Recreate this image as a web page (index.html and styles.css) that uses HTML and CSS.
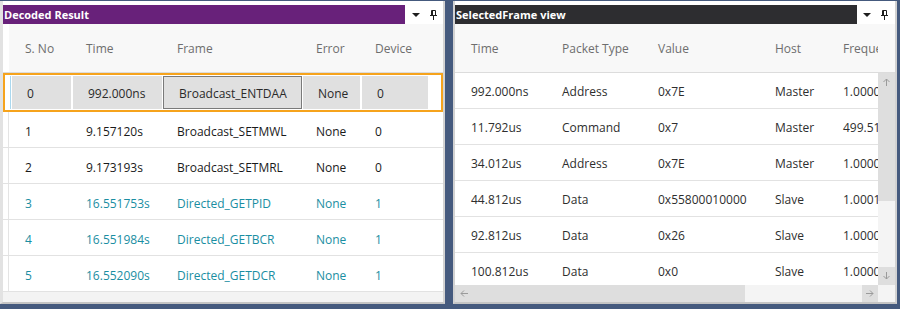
FILE: index.html
```html
<!DOCTYPE html>
<html>
    <head>
        <meta charset="UTF-8">
        <title>Decoded Result</title>
        <link rel="stylesheet" href="styles.css">
    </head>
    <body>
        <div class="dock">
            <!-- decoded result pane -->
            <div class="pane pane-left">
                <div class="titlebar">
                    <div class="title title-purple">Decoded Result</div>
                    <div class="tools">
                        <svg class="drop" width="8" height="4" viewBox="0 0 8 4"><path d="M0 0H8L4 4Z" fill="#1e1e1e"/></svg>
                        <svg class="pin" width="7" height="10" viewBox="0 0 7 10"><path d="M1.5 0.5H5.5V5.5M1.5 0.5V5.5M2.5 0.5V5.5M0 5.5H7M3.5 5.5V10" stroke="#1e1e1e" stroke-width="1" fill="none"/></svg>
                    </div>
                </div>
                <div class="head lcols">
                    <div class="rh"></div>
                    <div class="c1">S. No</div>
                    <div class="c2">Time</div>
                    <div class="c3">Frame</div>
                    <div class="c4">Error</div>
                    <div class="c5">Device</div>
                </div>
                <div class="lrow sel">
                    <div class="rh"></div>
                    <div class="c1">0</div>
                    <div class="c2">992.000ns</div>
                    <div class="c3">Broadcast_ENTDAA</div>
                    <div class="c4">None</div>
                    <div class="c5">0</div>
                </div>
                <div class="lrow lcols">
                    <div class="rh"></div>
                    <div class="c1">1</div>
                    <div class="c2">9.157120s</div>
                    <div class="c3">Broadcast_SETMWL</div>
                    <div class="c4">None</div>
                    <div class="c5">0</div>
                </div>
                <div class="lrow lcols">
                    <div class="rh"></div>
                    <div class="c1">2</div>
                    <div class="c2">9.173193s</div>
                    <div class="c3">Broadcast_SETMRL</div>
                    <div class="c4">None</div>
                    <div class="c5">0</div>
                </div>
                <div class="lrow lcols directed">
                    <div class="rh"></div>
                    <div class="c1">3</div>
                    <div class="c2">16.551753s</div>
                    <div class="c3">Directed_GETPID</div>
                    <div class="c4">None</div>
                    <div class="c5">1</div>
                </div>
                <div class="lrow lcols directed">
                    <div class="rh"></div>
                    <div class="c1">4</div>
                    <div class="c2">16.551984s</div>
                    <div class="c3">Directed_GETBCR</div>
                    <div class="c4">None</div>
                    <div class="c5">1</div>
                </div>
                <div class="lrow lcols directed">
                    <div class="rh"></div>
                    <div class="c1">5</div>
                    <div class="c2">16.552090s</div>
                    <div class="c3">Directed_GETDCR</div>
                    <div class="c4">None</div>
                    <div class="c5">1</div>
                </div>
                <div class="filler"></div>
            </div>

            <!-- selected frame pane -->
            <div class="pane pane-right">
                <div class="titlebar">
                    <div class="title title-dark">SelectedFrame view</div>
                    <div class="tools">
                        <svg class="drop" width="8" height="4" viewBox="0 0 8 4"><path d="M0 0H8L4 4Z" fill="#1e1e1e"/></svg>
                        <svg class="pin" width="7" height="10" viewBox="0 0 7 10"><path d="M1.5 0.5H5.5V5.5M1.5 0.5V5.5M2.5 0.5V5.5M0 5.5H7M3.5 5.5V10" stroke="#1e1e1e" stroke-width="1" fill="none"/></svg>
                    </div>
                </div>
                <div class="head rhead">
                    <div class="rcols">
                        <div>Time</div>
                        <div>Packet Type</div>
                        <div>Value</div>
                        <div>Host</div>
                        <div>Frequency</div>
                    </div>
                </div>
                <div class="rbody">
                    <div class="rrows">
                        <div class="rrow rcols"><div>992.000ns</div><div>Address</div><div>0x7E</div><div>Master</div><div>1.00000MHz</div></div>
                        <div class="rrow rcols"><div>11.792us</div><div>Command</div><div>0x7</div><div>Master</div><div>499.5104kHz</div></div>
                        <div class="rrow rcols"><div>34.012us</div><div>Address</div><div>0x7E</div><div>Master</div><div>1.00000MHz</div></div>
                        <div class="rrow rcols"><div>44.812us</div><div>Data</div><div>0x55800010000</div><div>Slave</div><div>1.00012MHz</div></div>
                        <div class="rrow rcols"><div>92.812us</div><div>Data</div><div>0x26</div><div>Slave</div><div>1.00000MHz</div></div>
                        <div class="rrow rcols"><div>100.812us</div><div>Data</div><div>0x0</div><div>Slave</div><div>1.00000MHz</div></div>
                    </div>
                    <div class="vscroll">
                        <div class="vbtn">
                            <svg width="7" height="8" viewBox="0 0 7 8"><path d="M3.5 1V8M0.5 4L3.5 1L6.5 4" stroke="#9a9a9a" fill="none"/></svg>
                        </div>
                        <div class="vthumb"></div>
                        <div class="vtrack"></div>
                        <div class="vbtn">
                            <svg width="7" height="8" viewBox="0 0 7 8"><path d="M3.5 0V7M0.5 4L3.5 7L6.5 4" stroke="#9a9a9a" fill="none"/></svg>
                        </div>
                    </div>
                </div>
                <div class="hscroll">
                    <div class="hthumb">
                        <svg width="8" height="7" viewBox="0 0 8 7"><path d="M1 3.5H8M4 0.5L1 3.5L4 6.5" stroke="#9a9a9a" fill="none"/></svg>
                    </div>
                    <div class="htrack"></div>
                    <div class="hbtn">
                        <svg width="8" height="7" viewBox="0 0 8 7"><path d="M0 3.5H7M4 0.5L7 3.5L4 6.5" stroke="#9a9a9a" fill="none"/></svg>
                    </div>
                    <div class="corner"></div>
                </div>
            </div>
        </div>
    </body>
</html>
```

FILE: styles.css
```css
* {
    box-sizing: border-box;
}
html, body {
    margin: 0;
    padding: 0;
}
body {
    width: 900px;
    height: 309px;
    overflow: hidden;
    background: #455a7e;
    font-family: "Open Sans", "Noto Sans", sans-serif;
    font-size: 12px;
    color: #1a1a1a;
}
.dock {
    display: flex;
    gap: 8px;
    padding-top: 1px;
}
.pane {
    display: flex;
    flex-direction: column;
    height: 303px;
    padding-top: 4px;
    background: #fff;
}
.pane-left {
    width: 445px;
    border-left: 3px solid #e2e2e2;
    border-right: 2px solid #d2d2d2;
    border-bottom: 2px solid #c4c4c4;
}
.pane-right {
    width: 444px;
    border-left: 2px solid #d2d2d2;
    border-right: 2px solid #d2d2d2;
    border-bottom: 2px solid #c4c4c4;
}
.titlebar {
    display: flex;
    flex: none;
    height: 19px;
}
.title {
    flex: 1;
    padding-left: 1px;
    color: #fff;
    font-weight: bold;
    font-size: 11px;
    line-height: 19px;
    white-space: nowrap;
}
.title-purple {
    background: #68217a;
}
.title-dark {
    background: #2d2d30;
}
.tools {
    display: flex;
    align-items: center;
    width: 38px;
    padding-left: 7px;
    gap: 10px;
}
.tools .pin {
    margin-top: 1px;
}
.pane-right .tools {
    padding-left: 6px;
}

/* headers */
.head {
    flex: none;
    height: 49px;
    background: #f8f8f8;
    border-bottom: 1px solid #dcdcdc;
    color: #6e6e6e;
}
.lcols, .sel {
    display: grid;
    align-items: center;
    white-space: nowrap;
}
.lcols {
    grid-template-columns: 6px 64px 90px 140px 59px 66px 1fr;
}
.lcols .rh {
    align-self: stretch;
    background: #fff;
    border-right: 1px solid #e4e4e4;
}
.head .rh {
    border-right: none;
}
.lcols .c1 { padding-left: 16px; }
.lcols .c2 { padding-left: 13px; }
.lcols .c3 { padding-left: 14px; }
.lcols .c4 { padding-left: 13px; }
.lcols .c5 { padding-left: 13px; }

/* rows */
.lrow {
    flex: none;
    height: 36px;
    border-bottom: 1px solid #e2e2e2;
}
.lrow.lcols > div {
    padding-top: 3px;
}
.lrow.lcols > .rh {
    padding-top: 0;
}
.directed {
    color: #1a8ea2;
}
.sel {
    height: 39px;
    padding: 1px 0;
    border: 2px solid #f6a31c;
    grid-template-columns: 7px 61px 90px 140px 59px 66px 1fr;
    color: #2a2a2a;
}
.sel > div {
    align-self: stretch;
    display: flex;
    align-items: center;
    padding-top: 1px;
    background: #e0e0e0;
}
.sel .rh {
    margin-right: 1px;
    background: #fff;
    border-right: 1px solid #aad8ef;
}
.sel .c1 { padding-left: 15px; border-right: 2px solid #fff; }
.sel .c2 { padding-left: 15px; border-right: 1px solid #fff; }
.sel .c3 { padding-left: 15px; border: 1px solid #7a7a7a; margin-right: 1px; }
.sel .c4 { padding-left: 15px; border-right: 2px solid #fff; }
.sel .c5 { padding-left: 15px; }
.filler {
    flex: 1;
    background: #f3f3f3;
}

/* selected frame view */
.rhead {
    display: flex;
    align-items: center;
}
.rcols {
    display: grid;
    grid-template-columns: 91px 96px 117px 68px 1fr;
    align-items: center;
    white-space: nowrap;
}
.rhead .rcols {
    width: 423px;
    overflow: hidden;
}
.rcols > div {
    padding-left: 16px;
    overflow: hidden;
}
.rbody {
    display: flex;
    height: 212px;
    flex: none;
}
.rrows {
    width: 423px;
    overflow: hidden;
}
.rrow {
    height: 36px;
    padding-top: 2px;
    border-bottom: 1px solid #e2e2e2;
    color: #2e2e2e;
}
.vscroll {
    display: flex;
    flex-direction: column;
    width: 17px;
}
.vbtn {
    display: flex;
    align-items: center;
    justify-content: center;
    height: 18px;
    background: #dedede;
}
.vthumb {
    height: 110px;
    background: #dedede;
}
.vtrack {
    height: 66px;
    background: #f4f4f4;
}
.hscroll {
    display: flex;
    height: 17px;
    flex: none;
}
.hthumb {
    display: flex;
    align-items: center;
    width: 290px;
    padding-left: 5px;
    background: #dedede;
}
.htrack {
    width: 117px;
    background: #f4f4f4;
}
.hbtn {
    display: flex;
    align-items: center;
    justify-content: center;
    width: 16px;
    background: #dedede;
}
.corner {
    flex: 1;
    background: #f4f4f4;
}
```
